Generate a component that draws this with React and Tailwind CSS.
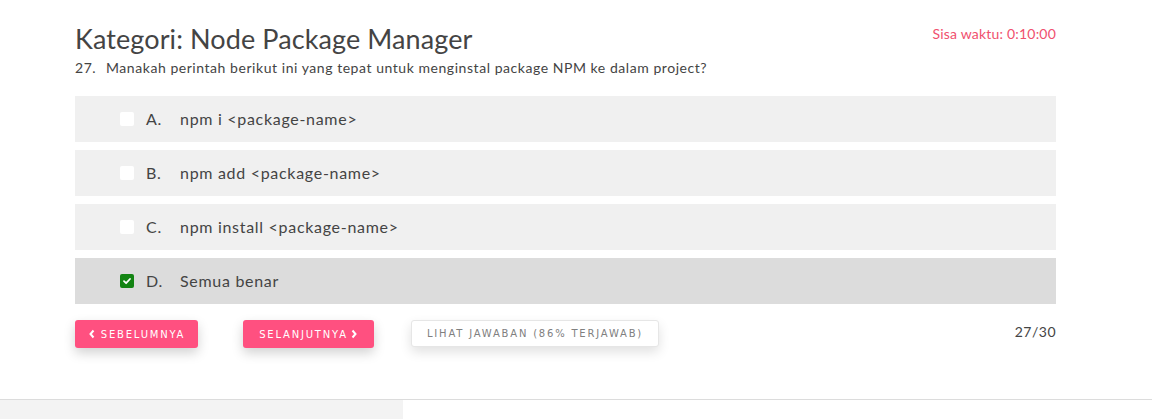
import React from "react";

const options = [
  { l: "A.", t: "npm i <package-name>", c: false },
  { l: "B.", t: "npm add <package-name>", c: false },
  { l: "C.", t: "npm install <package-name>", c: false },
  { l: "D.", t: "Semua benar", c: true },
];

export default function App() {
  return (
    <div className="w-[1152px] h-[419px] bg-white overflow-hidden flex flex-col" style={{ fontFamily: "Lato, 'Open Sans', sans-serif" }}>
      <div className="h-[399px] pl-[75px] pt-[22px]">
        <div className="w-[981px]">
          <div className="flex justify-between items-start">
            <h1 className="text-[27px] leading-[34px] text-[#444] font-normal tracking-[0.1px]">Kategori: Node Package Manager</h1>
            <div className="text-[14px] leading-[20px] text-[#f0506e] mt-[2px] tracking-[0.2px]">Sisa waktu: 0:10:00</div>
          </div>
          <div className="flex text-[14px] leading-[20px] text-[#444] mt-[2px] tracking-[0.55px]">
            <span className="w-[31px]">27.</span>
            <span>Manakah perintah berikut ini yang tepat untuk menginstal package NPM ke dalam project?</span>
          </div>
          <div className="flex flex-col gap-[8px] mt-[18px]">
            {options.map((o) => (
              <div key={o.l} className={`h-[46px] flex items-center pl-[45px] text-[16px] text-[#444] tracking-[0.7px] ${o.c ? "bg-[#dcdcdc]" : "bg-[#f0f0f0]"}`}>
                {o.c ? (
                  <span className="w-[14px] h-[14px] bg-[#138413] rounded-[2px] flex items-center justify-center">
                    <svg width="10" height="10" viewBox="0 0 10 10"><path d="M2 5.2 L4.1 7.2 L8 3" stroke="#fff" strokeWidth="1.8" fill="none" strokeLinecap="round" strokeLinejoin="round" /></svg>
                  </span>
                ) : (
                  <span className="w-[14px] h-[14px] bg-white rounded-[2px]" />
                )}
                <span className="ml-[12px] w-[34px]">{o.l}</span>
                <span>{o.t}</span>
              </div>
            ))}
          </div>
          <div className="flex items-start mt-[16px]" style={{ fontFamily: "'DejaVu Sans', sans-serif" }}>
            <button className="h-[28px] w-[123px] bg-[#ff5080] rounded-[3px] text-white text-[10px] tracking-[1.8px] flex items-center justify-center shadow-[0_5px_12px_rgba(0,0,0,0.18)]">
              <svg width="8" height="10" viewBox="0 0 8 10" className="mr-[5px]"><path d="M5.5 1.5 L2.5 5 L5.5 8.5" stroke="#fff" strokeWidth="2" fill="none" /></svg>
              SEBELUMNYA
            </button>
            <button className="ml-[45px] h-[28px] w-[131px] bg-[#ff5080] rounded-[3px] text-white text-[10px] tracking-[1.8px] flex items-center justify-center shadow-[0_5px_12px_rgba(0,0,0,0.18)]">
              SELANJUTNYA
              <svg width="8" height="10" viewBox="0 0 8 10" className="ml-[2px]"><path d="M2.5 1.5 L5.5 5 L2.5 8.5" stroke="#fff" strokeWidth="2" fill="none" /></svg>
            </button>
            <button className="ml-[37px] h-[27px] w-[248px] bg-white border border-[#e6e6e6] rounded-[3px] text-[#808080] text-[10px] tracking-[1.8px] flex items-center justify-center shadow-[0_5px_12px_rgba(0,0,0,0.12)]">
              LIHAT JAWABAN (86% TERJAWAB)
            </button>
            <div className="ml-auto text-[14px] text-[#444] mt-[1px] tracking-[0.5px]" style={{ fontFamily: "Lato, sans-serif" }}>27/30</div>
          </div>
        </div>
      </div>
      <div className="flex-1 border-t border-[#dcdcdc] flex">
        <div className="w-[403px] bg-[#f3f3f3]" />
      </div>
    </div>
  );
}
